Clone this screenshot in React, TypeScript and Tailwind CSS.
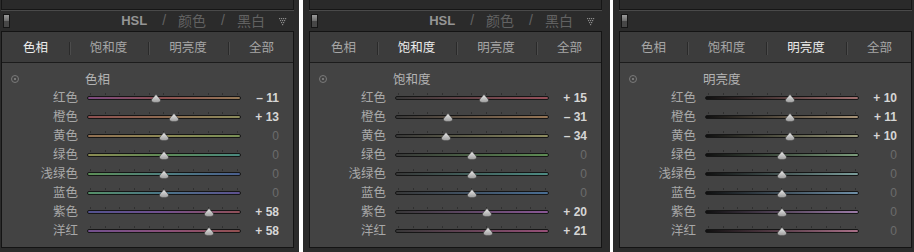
import React from "react";

type Row = { label: string; value: number; from: string; via?: string; to: string };

const names = ["红色", "橙色", "黄色", "绿色", "浅绿色", "蓝色", "紫色", "洋红"];

const hueRows: Row[] = [
  { label: names[0], value: -11, from: "#7c4a80", via: "#8c5050", to: "#957a58" },
  { label: names[1], value: 13, from: "#8e5050", via: "#8e6c52", to: "#8c8c5c" },
  { label: names[2], value: 0, from: "#927052", via: "#8e8a56", to: "#7a9056" },
  { label: names[3], value: 0, from: "#8c8c52", via: "#5e8a56", to: "#4a8a80" },
  { label: names[4], value: 0, from: "#5c8e56", via: "#508080", to: "#4a5e8e" },
  { label: names[5], value: 0, from: "#569068", via: "#4a7488", to: "#5e5090" },
  { label: names[6], value: 58, from: "#52528e", via: "#72508e", to: "#905058" },
  { label: names[7], value: 58, from: "#72508e", via: "#8a507a", to: "#925050" },
];

const satColors = ["#96505a", "#967656", "#8e8c60", "#5e8c54", "#4e8c84", "#4a6e94", "#8a5896", "#965078"];
const satValues = [15, -31, -34, 0, 0, 0, 20, 21];
const satRows: Row[] = names.map((label, i) => ({ label, value: satValues[i], from: "#383838", to: satColors[i] }));

const lumColors = ["#a07070", "#a89478", "#9c9c7c", "#7c9c7c", "#7c9e9c", "#7090a8", "#9c7ca8", "#a87088"];
const lumValues = [10, 11, 10, 0, 0, 0, 0, 0];
const lumRows: Row[] = names.map((label, i) => ({ label, value: lumValues[i], from: "#101010", to: lumColors[i] }));

const tabs = ["色相", "饱和度", "明亮度", "全部"];

function fmt(v: number) {
  if (v === 0) return "0";
  return v > 0 ? `+ ${v}` : `– ${Math.abs(v)}`;
}

function Toggle() {
  return (
    <div className="flex h-[14px] w-[7px] flex-col border border-[#151515]">
      <div className="flex-1 bg-gradient-to-b from-[#9a9a9a] to-[#6a6a6a]" />
      <div className="flex-1 bg-[#474747]" />
    </div>
  );
}

function DottedArrow() {
  const dots = [
    [0, 0], [2, 0], [4, 0], [6, 0],
    [1, 2], [3, 2], [5, 2],
    [2, 4], [4, 4],
    [3, 6],
  ];
  return (
    <svg width="8" height="8" viewBox="0 0 8 8">
      {dots.map(([x, y], i) => (
        <rect key={i} x={x} y={y} width="1.2" height="1.2" fill="#8a8a8a" />
      ))}
    </svg>
  );
}

function Thumb() {
  return (
    <svg width="10" height="9" viewBox="0 0 10 9">
      <defs>
        <linearGradient id="th" x1="0" y1="0" x2="0" y2="1">
          <stop offset="0" stopColor="#ececec" />
          <stop offset="1" stopColor="#9a9a9a" />
        </linearGradient>
      </defs>
      <path d="M5 0.3 C6.2 2.4 9.6 4.8 9.6 6.4 C9.6 7.9 7.6 8.7 5 8.7 C2.4 8.7 0.4 7.9 0.4 6.4 C0.4 4.8 3.8 2.4 5 0.3Z" fill="url(#th)" stroke="#2a2a2a" strokeWidth="0.5" />
    </svg>
  );
}

function Slider({ row }: { row: Row }) {
  const pct = (row.value + 100) / 2;
  const grad = row.via
    ? `linear-gradient(to right, ${row.from}, ${row.via}, ${row.to})`
    : `linear-gradient(to right, ${row.from}, ${row.to})`;
  return (
    <div className="relative flex h-[19px] w-[154px] items-center">
      <div className="absolute left-[3px] right-[3px] top-[5px] flex justify-between">
        {Array.from({ length: 11 }).map((_, i) => (
          <div key={i} className="h-[2px] w-px bg-[#303030]" />
        ))}
      </div>
      <div className="h-[4px] w-full rounded-full border border-[#161616]" style={{ background: grad }} />
      <div className="absolute top-[6px] -ml-[5px]" style={{ left: `${pct}%` }}>
        <Thumb />
      </div>
    </div>
  );
}

function Panel({ active, title, rows, header }: { active: number; title: string; rows: Row[]; header: boolean }) {
  return (
    <div className="flex h-[252px] w-[307px] shrink-0 flex-col bg-[#2b2b2b] pl-[6px] pr-[8px]">
      <div className="h-[10px] shrink-0 border-x border-b border-[#161616] bg-[#2a2a2a] shadow-[0_1px_0_#4a4a4a]" />
      <div className="flex h-[21px] shrink-0 items-center pl-[2px]">
        <Toggle />
        {header && (
          <div className="ml-auto flex items-center pr-[7px] text-[14px] text-[#626262]">
            <span className="mr-[3px] font-['Liberation_Sans'] text-[13px] font-bold text-[#959595]">HSL</span>
            <span className="ml-[12px] font-['Liberation_Sans']">/</span>
            <span className="ml-[12px]">颜色</span>
            <span className="ml-[15px] font-['Liberation_Sans']">/</span>
            <span className="ml-[12px]">黑白</span>
            <span className="ml-[14px] mt-[2px]">
              <DottedArrow />
            </span>
          </div>
        )}
      </div>
      <div className="flex h-[217px] shrink-0 flex-col border border-[#141414]">
        <div className="grid h-[31px] shrink-0 grid-cols-[67px_79px_80px_67px] items-center border-b border-[#1c1c1c] bg-[#3c3c3c]">
          {tabs.map((t, i) => (
            <div key={t} className="relative flex h-full items-center justify-center">
              {i > 0 && <div className="absolute left-0 top-[10px] h-[13px] w-px bg-[#2a2a2a] shadow-[1px_0_0_#4c4c4c]" />}
              <span className={`text-[12.5px] ${i === active ? "text-[#ececec]" : "text-[#a6a6a6]"}`}>{t}</span>
            </div>
          ))}
        </div>
        <div className="flex flex-1 flex-col bg-[#434343] pt-[7px]">
          <div className="flex h-[18px] items-center">
            <div className="ml-[9px] flex h-[8px] w-[8px] items-center justify-center rounded-full border border-[#7a7a7a]">
              <div className="h-[2px] w-[2px] rounded-full bg-[#8a8a8a]" />
            </div>
            <span className="ml-[66px] text-[12.5px] text-[#b4b4b4]">{title}</span>
          </div>
          {rows.map((r) => (
            <div key={r.label} className="flex h-[19px] items-center">
              <span className="w-[76px] text-right text-[12.5px] text-[#a8a8a8]">{r.label}</span>
              <div className="ml-[9px]">
                <Slider row={r} />
              </div>
              <span
                className={`w-[38px] text-right font-['Liberation_Sans'] text-[12px] ${
                  r.value === 0 ? "text-[#6c6c6c]" : "font-bold text-[#d6d6d6]"
                }`}
              >
                {fmt(r.value)}
              </span>
            </div>
          ))}
        </div>
      </div>
    </div>
  );
}

export default function App() {
  return (
    <div className="flex h-[252px] w-[914px] overflow-hidden bg-white font-['Noto_Sans_CJK_SC',sans-serif]">
      <div className="w-[299px] shrink-0 overflow-hidden">
        <div className="-ml-[5px]">
          <Panel active={0} title="色相" rows={hueRows} header />
        </div>
      </div>
      <div className="ml-[4px] shrink-0">
        <Panel active={1} title="饱和度" rows={satRows} header />
      </div>
      <div className="ml-[3px] shrink-0">
        <Panel active={2} title="明亮度" rows={lumRows} header={false} />
      </div>
    </div>
  );
}
